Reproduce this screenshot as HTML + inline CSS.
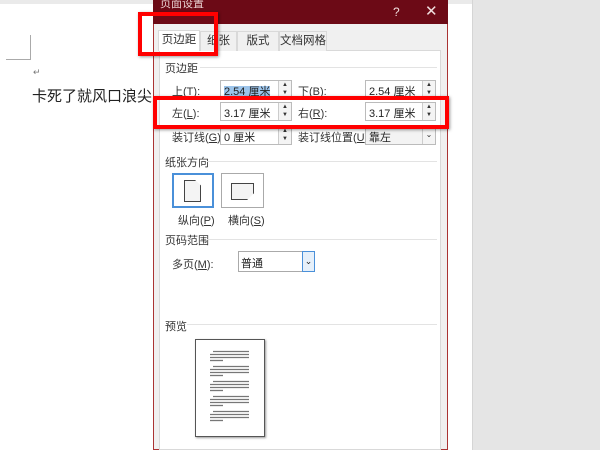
<!DOCTYPE html>
<html><head><meta charset="utf-8"><style>
*{margin:0;padding:0;box-sizing:border-box}
body{width:600px;height:450px;overflow:hidden;background:#fff;position:relative;font-family:"Liberation Sans","Noto Sans CJK SC",sans-serif;font-size:11px;color:#222}
.a{position:absolute}
.lbl{position:absolute;font-size:11px;color:#333;white-space:nowrap}
.inp{position:absolute;height:19px;border:1px solid #bbb;background:#fff;font-size:11px;padding:2px 3px;color:#222}
.spin{position:absolute;right:0;top:0;width:13px;height:17px;border-left:1px solid #ccc;background:#f4f4f4;font-size:6px;line-height:8px;text-align:center;color:#333}
.sec{position:absolute;font-size:11px;color:#333;white-space:nowrap}
.line{position:absolute;height:1px;background:#e3e3e3}
.tab{position:absolute;top:31px;height:20px;border:1px solid #d9d9d9;border-bottom:none;background:#f0f0f0;font-size:11.5px;text-align:center;line-height:19px;color:#333;white-space:nowrap;overflow:hidden}
.red{position:absolute;border:4px solid #f00;box-shadow:1px 1px 3px rgba(0,0,0,.4)}
</style></head><body>
<div class="a" style="left:0;top:0;width:472px;height:4px;background:#eaeaea"></div>
<div class="a" style="left:472px;top:0;width:128px;height:450px;background:#e5e5e5;border-left:1px solid #d5d5d5"></div>
<div class="a" style="left:6px;top:35px;width:25px;height:25px;border-right:1px solid #aaa;border-bottom:1px solid #aaa"></div>
<div class="a" style="left:33px;top:67px;font-size:9px;color:#777">↵</div>
<div class="a" style="left:32px;top:85px;font-size:15px;color:#222">卡死了就风口浪尖</div>

<div class="a" style="left:153px;top:0;width:295px;height:450px;background:#f0f0f0;border:1px solid #a33;border-top:none"></div>
<div class="a" style="left:153px;top:0;width:295px;height:24px;background:#6c0a16"></div>
<div class="a" style="left:160px;top:-5px;color:#e8d0d0;font-size:11px">页面设置</div>
<div class="a" style="left:393px;top:5px;color:#f0dede;font-size:12px">?</div>
<div class="a" style="left:425px;top:2px;color:#f0dede;font-size:15px">✕</div>

<div class="a" style="left:159px;top:50px;width:282px;height:400px;background:#fff;border:1px solid #d9d9d9"></div>
<div class="tab" style="left:158px;width:42px;background:#fff;height:21px;top:30px">页边距</div>
<div class="tab" style="left:200px;width:37px">纸张</div>
<div class="tab" style="left:237px;width:42px">版式</div>
<div class="tab" style="left:279px;width:48px">文档网格</div>

<div class="sec" style="left:165px;top:60px">页边距</div><div class="line" style="left:200px;top:67px;width:237px"></div>
<div class="lbl" style="left:172px;top:83px">上(<u>T</u>):</div>
<div class="inp" style="left:220px;top:80px;width:72px"><span style="background:#9cc4ea">2.54 厘米</span><div class="spin">▲<br>▼</div></div>
<div class="lbl" style="left:298px;top:83px">下(<u>B</u>):</div>
<div class="inp" style="left:365px;top:80px;width:71px">2.54 厘米<div class="spin">▲<br>▼</div></div>
<div class="lbl" style="left:172px;top:105px">左(<u>L</u>):</div>
<div class="inp" style="left:220px;top:102px;width:72px">3.17 厘米<div class="spin">▲<br>▼</div></div>
<div class="lbl" style="left:298px;top:105px">右(<u>R</u>):</div>
<div class="inp" style="left:365px;top:102px;width:71px">3.17 厘米<div class="spin">▲<br>▼</div></div>
<div class="lbl" style="left:172px;top:129px">装订线(<u>G</u>):</div>
<div class="inp" style="left:220px;top:126px;width:72px">0 厘米<div class="spin">▲<br>▼</div></div>
<div class="lbl" style="left:298px;top:129px">装订线位置(<u>U</u>):</div>
<div class="inp" style="left:365px;top:126px;width:71px;background:#f3f3f3">靠左<div class="spin" style="font-size:8px;line-height:16px">⌄</div></div>

<div class="sec" style="left:165px;top:154px">纸张方向</div><div class="line" style="left:207px;top:161px;width:230px"></div>
<div class="a" style="left:172px;top:173px;width:42px;height:35px;border:2px solid #4a90d9;background:#fff"></div>
<div class="a" style="left:184px;top:180px;width:17px;height:22px;border:1px solid #444;background:#f4f4f4;clip-path:polygon(0 0,65% 0,100% 25%,100% 100%,0 100%)"></div>
<div class="a" style="left:221px;top:173px;width:43px;height:35px;border:1px solid #aaa;background:#fff"></div>
<div class="a" style="left:231px;top:183px;width:23px;height:17px;border:1px solid #444;background:#f4f4f4;clip-path:polygon(0 0,100% 0,100% 60%,70% 100%,0 100%)"></div>
<div class="lbl" style="left:178px;top:212px">纵向(<u>P</u>)</div>
<div class="lbl" style="left:228px;top:212px">横向(<u>S</u>)</div>

<div class="sec" style="left:165px;top:232px">页码范围</div><div class="line" style="left:207px;top:239px;width:230px"></div>
<div class="lbl" style="left:172px;top:256px">多页(<u>M</u>):</div>
<div class="a" style="left:238px;top:251px;width:77px;height:21px;border:1px solid #aaa;background:#fff;padding:3px 2px">普通</div>
<div class="a" style="left:302px;top:251px;width:13px;height:21px;border:1px solid #4a90d9;background:#e6f0fa;font-size:9px;text-align:center;line-height:18px">⌄</div>

<div class="sec" style="left:165px;top:318px">预览</div><div class="line" style="left:187px;top:324px;width:250px"></div>
<div class="a" style="left:195px;top:339px;width:70px;height:98px;border:1px solid #555;background:#fff;box-shadow:1px 1px 2px #999"></div>
<svg class="a" style="left:210px;top:350px" width="42" height="75">
<g stroke="#777" stroke-width="1.3">
<line x1="3" y1="1.5" x2="39" y2="1.5"/><line x1="0" y1="4.5" x2="39" y2="4.5"/><line x1="0" y1="7.5" x2="39" y2="7.5"/><line x1="0" y1="10.5" x2="13" y2="10.5"/>
<line x1="3" y1="16.5" x2="39" y2="16.5"/><line x1="0" y1="19.5" x2="39" y2="19.5"/><line x1="0" y1="22.5" x2="39" y2="22.5"/><line x1="0" y1="25.5" x2="13" y2="25.5"/>
<line x1="3" y1="31.5" x2="39" y2="31.5"/><line x1="0" y1="34.5" x2="39" y2="34.5"/><line x1="0" y1="37.5" x2="39" y2="37.5"/><line x1="0" y1="40.5" x2="13" y2="40.5"/>
<line x1="3" y1="46.5" x2="39" y2="46.5"/><line x1="0" y1="49.5" x2="39" y2="49.5"/><line x1="0" y1="52.5" x2="39" y2="52.5"/><line x1="0" y1="55.5" x2="13" y2="55.5"/>
<line x1="3" y1="61.5" x2="39" y2="61.5"/><line x1="0" y1="64.5" x2="39" y2="64.5"/><line x1="0" y1="67.5" x2="39" y2="67.5"/><line x1="0" y1="70.5" x2="13" y2="70.5"/>
</g></svg>

<div class="red" style="left:138px;top:12px;width:80px;height:44px"></div>
<div class="red" style="left:153px;top:96px;width:296px;height:33px"></div>
</body></html>
